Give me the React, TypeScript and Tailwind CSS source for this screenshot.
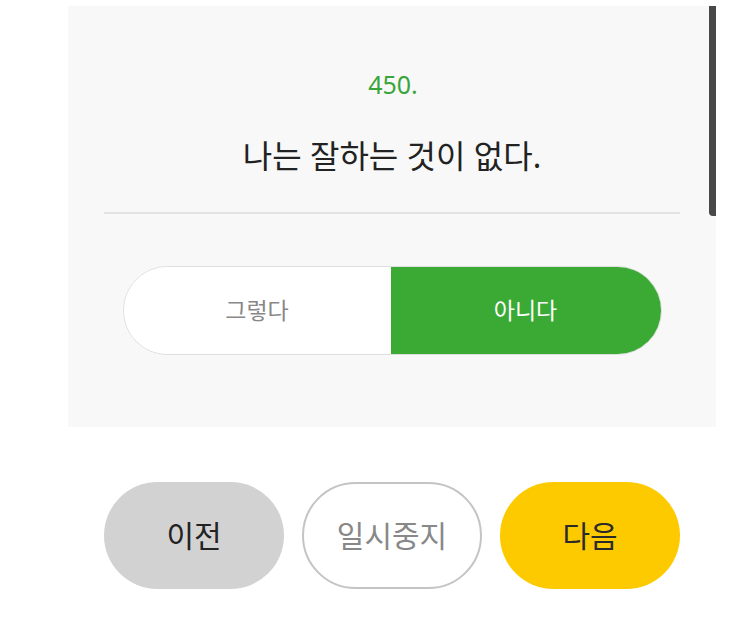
export default function App() {
  return (
    <div
      className="w-[755px] h-[622px] bg-white overflow-hidden"
      style={{ fontFamily: '"Noto Sans", "Noto Sans CJK KR", sans-serif' }}
    >
      <div className="relative ml-[68px] mt-[6px] w-[648px] h-[421px] bg-[#f8f8f8] flex flex-col items-center">
        <div className="mt-[61px] ml-[2px] text-[25px] leading-[34px] text-[#3aa53a]">450.</div>
        <div className="mt-[33px] text-[32px] leading-[44px] text-[#222]">나는 잘하는 것이 없다.</div>
        <div className="mt-[34px] w-[576px] h-[2px] bg-[#e3e3e3]" />
        <div className="mt-[52px] w-[539px] h-[89px] flex rounded-full overflow-hidden border border-[#dedede]">
          <button className="flex-1 bg-white text-[23px] text-[#888] flex items-center justify-center">그렇다</button>
          <button className="w-[270px] bg-[#3aaa35] text-[23px] text-white flex items-center justify-center">아니다</button>
        </div>
        <div className="absolute right-0 top-0 w-[7px] h-[210px] bg-[#484848] rounded-bl-[4px]" />
      </div>
      <div className="mt-[55px] ml-[104px] flex gap-[18px]">
        <button className="w-[180px] h-[107px] rounded-full bg-[#d2d2d2] text-[30px] text-[#222]">이전</button>
        <button className="w-[180px] h-[107px] rounded-full bg-white border-2 border-[#c4c4c4] text-[30px] text-[#888]">일시중지</button>
        <button className="w-[180px] h-[107px] rounded-full bg-[#fdca00] text-[30px] text-[#2a2a2a]">다음</button>
      </div>
    </div>
  );
}
